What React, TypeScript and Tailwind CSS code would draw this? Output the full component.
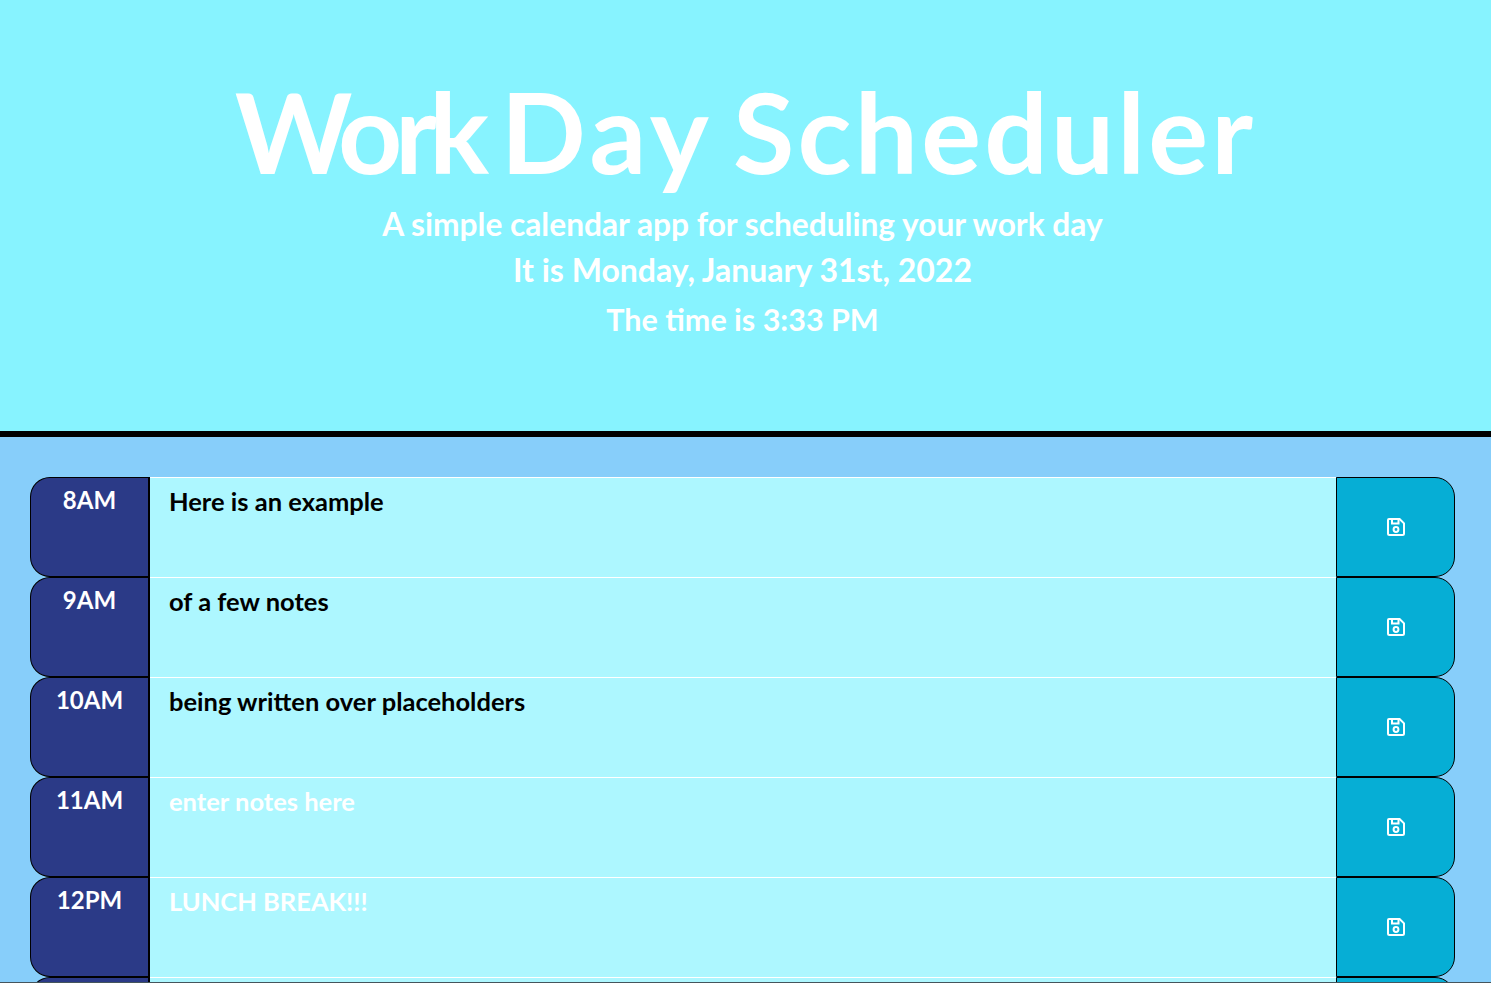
const hours = [
  { label: '8AM', note: 'Here is an example', past: true },
  { label: '9AM', note: 'of a few notes', past: true },
  { label: '10AM', note: 'being written over placeholders', past: true },
  { label: '11AM', note: 'enter notes here', past: false },
  { label: '12PM', note: 'LUNCH BREAK!!!', past: false },
  // next block only peeks in at the bottom of the window
  { label: '', note: '', past: false },
];

function SaveIcon() {
  return (
    <svg className="w-[18px] h-[18px]" viewBox="0 0 18 18" fill="none" stroke="currentColor" strokeWidth={2}>
      <path d="M2 1h10.6L17 5.4V15.5a1.5 1.5 0 0 1-1.5 1.5H2.5A1.5 1.5 0 0 1 1 15.5V2a1 1 0 0 1 1-1z" />
      <path d="M5 1.5v4h6.5v-4" />
      <circle cx="9" cy="11.5" r="2.4" />
    </svg>
  );
}

function HourRow({ label, note, past }: { label: string; note: string; past: boolean }) {
  return (
    <div className="flex h-[100px]">
      <div className="w-[120px] shrink-0 bg-[#2b3a87] border border-r-2 border-black rounded-l-[20px] text-white text-center text-[24px] font-bold leading-[44px]">
        {label}
      </div>
      <div className="flex-1 bg-[#adf7ff] border-t border-white px-[19px] pt-[6px]">
        <div className={`text-[25.5px] font-bold leading-[34px] ${past ? 'text-black' : 'text-white'}`}>{note}</div>
      </div>
      <button className="w-[119px] shrink-0 bg-[#06aed5] border border-black rounded-r-[20px] text-white flex items-center justify-center">
        <SaveIcon />
      </button>
    </div>
  );
}

export default function App() {
  return (
    <div className="relative h-screen overflow-hidden bg-[#87cefa] font-['Lato','Open_Sans',sans-serif]">
      {/* Header */}
      <header className="h-[437px] bg-[#87f3ff] border-b-[6px] border-black text-white text-center pt-[67px]">
        <h1 className="text-[112px] font-bold leading-[128px] whitespace-nowrap [word-spacing:-8px]">
          <span className="tracking-[-7.5px]">Work</span> <span className="tracking-[5px]">Day</span>{' '}
          <span className="tracking-[3.2px]">Scheduler</span>
        </h1>
        <div className="pr-[6px]">
          <p className="text-[31.7px] font-bold leading-[45px] mt-[7px]">A simple calendar app for scheduling your work day</p>
          <p className="text-[32px] font-bold leading-[45px]">It is Monday, January 31st, 2022</p>
          <p className="text-[30.5px] font-bold leading-[45px] mt-[5px]">The time is 3:33 PM</p>
        </div>
      </header>

      {/* Time blocks */}
      <main className="pt-10 pl-[30px] pr-[36px]">
        {hours.map((hour, i) => (
          <HourRow key={i} {...hour} />
        ))}
      </main>

      {/* thin dark edge along the bottom of the window */}
      <div className="absolute bottom-0 inset-x-0 h-px bg-[#45555c]" />
    </div>
  );
}
